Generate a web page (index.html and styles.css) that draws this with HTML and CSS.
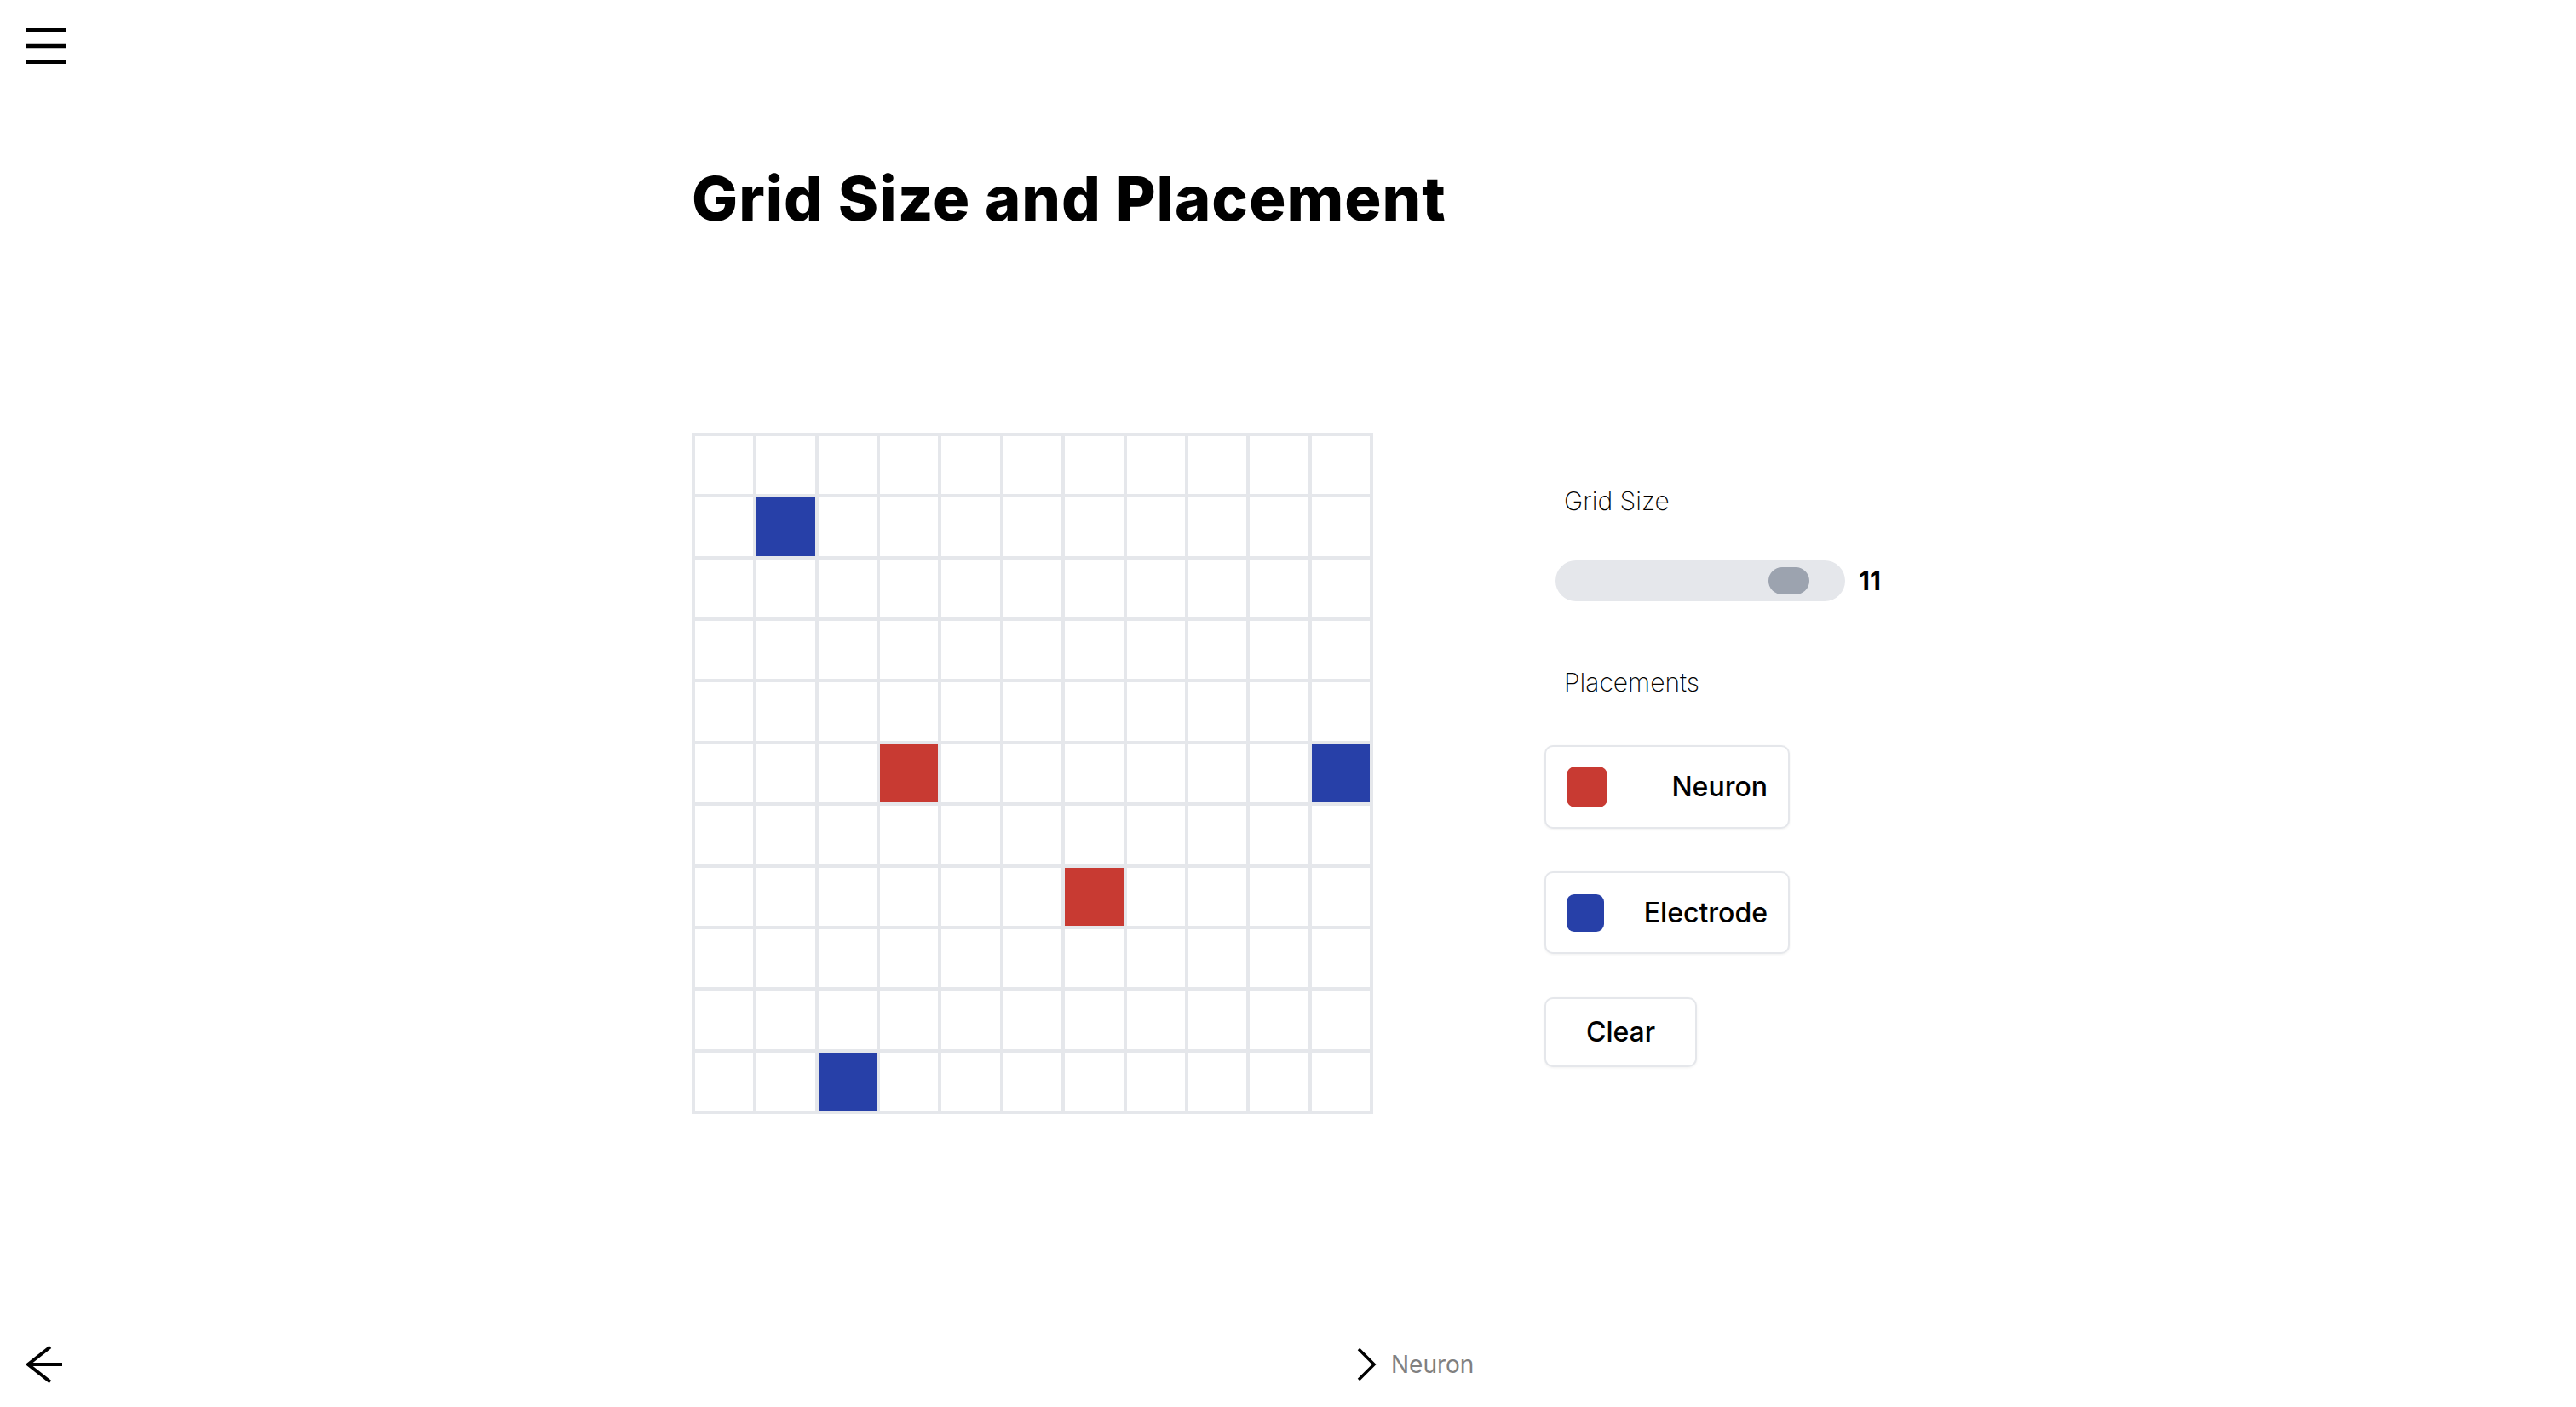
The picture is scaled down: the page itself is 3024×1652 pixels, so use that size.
FILE: index.html
```html
<!DOCTYPE html>
<html lang="en">
<head>
<meta charset="utf-8">
<title>Grid Size and Placement</title>
<link rel="stylesheet" href="styles.css">
</head>
<body>
<header class="topbar">
  <button class="icon-btn menu-btn" aria-label="Menu">
    <svg width="48" height="42" viewBox="0 0 48 42"><rect x="0" y="0" width="48" height="4.5" fill="#000"/><rect x="0" y="18.75" width="48" height="4.5" fill="#000"/><rect x="0" y="37.5" width="48" height="4.5" fill="#000"/></svg>
  </button>
</header>
<main class="page">
  <h1 class="title">Grid Size and Placement</h1>
  <div class="content">
    <div class="grid">
      <div class="cell"></div><div class="cell"></div><div class="cell"></div><div class="cell"></div><div class="cell"></div><div class="cell"></div><div class="cell"></div><div class="cell"></div><div class="cell"></div><div class="cell"></div><div class="cell"></div>
      <div class="cell"></div><div class="cell electrode"></div><div class="cell"></div><div class="cell"></div><div class="cell"></div><div class="cell"></div><div class="cell"></div><div class="cell"></div><div class="cell"></div><div class="cell"></div><div class="cell"></div>
      <div class="cell"></div><div class="cell"></div><div class="cell"></div><div class="cell"></div><div class="cell"></div><div class="cell"></div><div class="cell"></div><div class="cell"></div><div class="cell"></div><div class="cell"></div><div class="cell"></div>
      <div class="cell"></div><div class="cell"></div><div class="cell"></div><div class="cell"></div><div class="cell"></div><div class="cell"></div><div class="cell"></div><div class="cell"></div><div class="cell"></div><div class="cell"></div><div class="cell"></div>
      <div class="cell"></div><div class="cell"></div><div class="cell"></div><div class="cell"></div><div class="cell"></div><div class="cell"></div><div class="cell"></div><div class="cell"></div><div class="cell"></div><div class="cell"></div><div class="cell"></div>
      <div class="cell"></div><div class="cell"></div><div class="cell"></div><div class="cell neuron"></div><div class="cell"></div><div class="cell"></div><div class="cell"></div><div class="cell"></div><div class="cell"></div><div class="cell"></div><div class="cell electrode"></div>
      <div class="cell"></div><div class="cell"></div><div class="cell"></div><div class="cell"></div><div class="cell"></div><div class="cell"></div><div class="cell"></div><div class="cell"></div><div class="cell"></div><div class="cell"></div><div class="cell"></div>
      <div class="cell"></div><div class="cell"></div><div class="cell"></div><div class="cell"></div><div class="cell"></div><div class="cell"></div><div class="cell neuron"></div><div class="cell"></div><div class="cell"></div><div class="cell"></div><div class="cell"></div>
      <div class="cell"></div><div class="cell"></div><div class="cell"></div><div class="cell"></div><div class="cell"></div><div class="cell"></div><div class="cell"></div><div class="cell"></div><div class="cell"></div><div class="cell"></div><div class="cell"></div>
      <div class="cell"></div><div class="cell"></div><div class="cell"></div><div class="cell"></div><div class="cell"></div><div class="cell"></div><div class="cell"></div><div class="cell"></div><div class="cell"></div><div class="cell"></div><div class="cell"></div>
      <div class="cell"></div><div class="cell"></div><div class="cell electrode"></div><div class="cell"></div><div class="cell"></div><div class="cell"></div><div class="cell"></div><div class="cell"></div><div class="cell"></div><div class="cell"></div><div class="cell"></div>
    </div>
    <aside class="panel">
      <div class="label">Grid Size</div>
      <div class="slider-row">
        <div class="track"><div class="thumb"></div></div>
        <span class="slider-value">11</span>
      </div>
      <div class="label label-placements">Placements</div>
      <button class="btn place-btn btn-neuron"><span class="swatch swatch-neuron"></span><span class="btn-text">Neuron</span></button>
      <button class="btn place-btn btn-electrode"><span class="swatch swatch-electrode"></span><span class="btn-text">Electrode</span></button>
      <button class="btn clear-btn"><span class="btn-text">Clear</span></button>
    </aside>
  </div>
</main>
<footer class="footer">
  <button class="icon-btn back-btn" aria-label="Back">
    <svg width="46" height="44" viewBox="0 0 46 44"><path d="M45 22 H5 M31 1.5 L5 22 L31 42.5" fill="none" stroke="#000" stroke-width="4"/></svg>
  </button>
  <div class="crumb">
    <svg class="chev" width="24" height="40" viewBox="0 0 24 40"><path d="M3 2 L21 20 L3 38" fill="none" stroke="#000" stroke-width="3.5"/></svg>
    <span class="crumb-text">Neuron</span>
  </div>
</footer>
</body>
</html>
```

FILE: styles.css
```css
* { box-sizing: border-box; }

html, body {
  margin: 0;
  padding: 0;
}

body {
  min-height: 100vh;
  display: flex;
  flex-direction: column;
  background: #ffffff;
  color: #000000;
  font-family: Inter, "Noto Sans", "DejaVu Sans", sans-serif;
}

.icon-btn {
  display: block;
  background: none;
  border: 0;
  padding: 0;
  margin: 0;
  cursor: pointer;
  line-height: 0;
}

.icon-btn svg { display: block; }

.topbar {
  display: flex;
  padding: 33px 0 0 30px;
}

.page {
  width: 1400px;
  margin: 0 auto;
}

.title {
  margin: 122px 0 0 0;
  font-size: 72px;
  line-height: 72px;
  font-weight: 800;
  letter-spacing: 1px;
}

.content {
  display: flex;
  align-items: flex-start;
  gap: 201px;
  margin-top: 239px;
}

.grid {
  width: 800px;
  height: 800px;
  flex: 0 0 800px;
  border: 2px solid #e5e7eb;
  display: grid;
  grid-template-columns: repeat(11, 1fr);
  grid-template-rows: repeat(11, 1fr);
}

.cell {
  border: 2px solid #e5e7eb;
  background: #ffffff;
}

.cell.electrode { background: #2740a8; }
.cell.neuron { background: #c83a32; }

.panel {
  display: flex;
  flex-direction: column;
  align-items: flex-start;
  padding-top: 65px;
}

.label {
  margin-left: 23px;
  font-size: 30px;
  line-height: 30px;
  font-weight: 200;
  color: #000000;
}

.slider-row {
  display: flex;
  align-items: center;
  margin: 55px 0 0 13px;
}

.track {
  position: relative;
  width: 340px;
  height: 48px;
  border-radius: 24px;
  background: #e5e7eb;
}

.thumb {
  position: absolute;
  left: 250px;
  top: 8px;
  width: 48px;
  height: 32px;
  border-radius: 16px;
  background: #9ca3af;
}

.slider-value {
  margin-left: 16px;
  font-size: 30px;
  line-height: 30px;
  font-weight: 700;
}

.label-placements {
  margin-top: 80px;
}

.btn {
  display: flex;
  align-items: center;
  border: 2px solid #e5e7eb;
  border-radius: 10px;
  background: #ffffff;
  box-shadow: 0 1px 3px rgba(0, 0, 0, 0.06);
  font-family: Inter, "Noto Sans", sans-serif;
  font-size: 32px;
  font-weight: 500;
  color: #000000;
  cursor: pointer;
}

.btn-text { line-height: 48px; }

.place-btn {
  width: 288px;
  height: 98px;
  padding: 0 24px;
  justify-content: space-between;
}

.btn-neuron { margin-top: 59px; }
.btn-electrode { margin-top: 50px; height: 97px; }

.swatch {
  display: block;
  flex: 0 0 auto;
}

.swatch-neuron {
  width: 48px;
  height: 48px;
  border-radius: 10px;
  background: #c83a32;
}

.swatch-electrode {
  width: 44px;
  height: 44px;
  border-radius: 9px;
  background: #2740a8;
}

.clear-btn {
  margin-top: 51px;
  width: 179px;
  height: 82px;
  padding: 0;
  justify-content: center;
}

.footer {
  margin-top: auto;
  display: flex;
  align-items: center;
  padding: 0 0 28px 28px;
}

.crumb {
  display: flex;
  align-items: center;
  margin-left: 1518px;
  gap: 17px;
}

.chev { display: block; }

.crumb-text {
  font-size: 28px;
  line-height: 28px;
  color: #808080;
  font-weight: 400;
}
```
